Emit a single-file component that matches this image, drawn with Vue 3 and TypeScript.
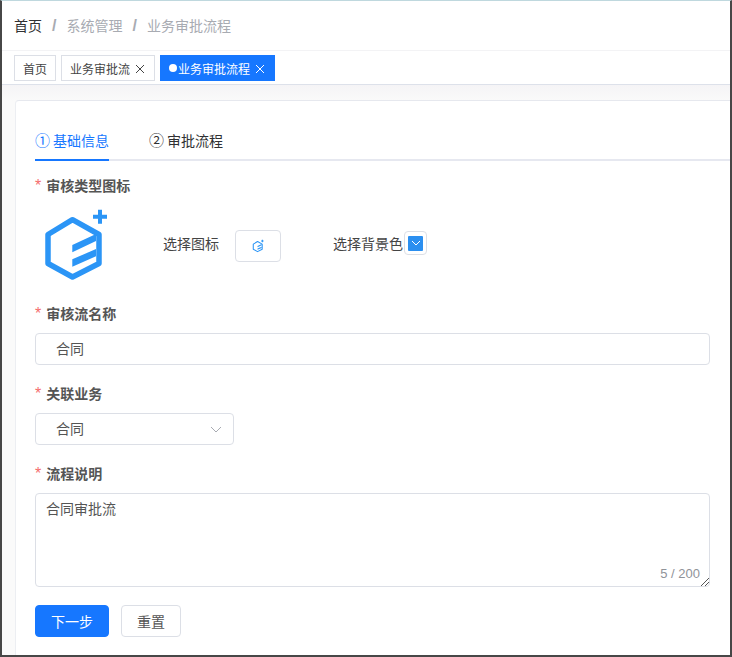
<template>
  <div class="frame">
    <header class="crumbs">
      <span class="crumb first">首页</span>
      <span class="slash">/</span>
      <span class="crumb">系统管理</span>
      <span class="slash">/</span>
      <span class="crumb">业务审批流程</span>
    </header>

    <nav class="tags">
      <span
        v-for="tag in tags"
        :key="tag.label"
        class="tag"
        :class="{ active: tag.active }"
      >
        <i v-if="tag.active" class="dot"></i>{{ tag.label }}
        <svg v-if="tag.closable" class="close" width="10" height="10" viewBox="0 0 10 10" fill="none" stroke="currentColor" stroke-width="1">
          <path d="M1 1l8 8M9 1l-8 8" />
        </svg>
      </span>
    </nav>

    <main class="main">
      <section class="card">
        <div class="steps">
          <span class="step active"><em>①</em>基础信息</span>
          <span class="step"><em>②</em>审批流程</span>
        </div>

        <div class="field">
          <label class="label">审核类型图标</label>
          <div class="icon-row">
            <svg class="big-icon" width="70" height="80" viewBox="0 0 70 80">
              <path d="M32.5 14.7 L59 29.5 V58.5 L32.5 72 L8 58.5 V29.5 Z" fill="none" stroke="#2b95f6" stroke-width="5.5" stroke-linejoin="round" />
              <path d="M32.3 40 L56 29 V36 L32.3 47.3 Z M32.3 54.3 L56 44 V51.3 L32.3 61.7 Z" fill="#2b95f6" />
              <path d="M53 11.7h14M60 4.7v14" stroke="#2b95f6" stroke-width="4" fill="none" />
            </svg>
            <span class="pick-text">选择图标</span>
            <button class="pick-btn">
              <svg width="14" height="14" viewBox="0 0 70 80">
                <path d="M32.5 14.7 L59 29.5 V58.5 L32.5 72 L8 58.5 V29.5 Z" fill="none" stroke="#2b95f6" stroke-width="6" stroke-linejoin="round" />
                <path d="M32.3 40 L56 29 V36 L32.3 47.3 Z M32.3 54.3 L56 44 V51.3 L32.3 61.7 Z" fill="#2b95f6" />
                <path d="M53 11.7h14M60 4.7v14" stroke="#2b95f6" stroke-width="6" fill="none" />
              </svg>
            </button>
            <span class="color-text">选择背景色</span>
            <span class="swatch">
              <span class="swatch-inner">
                <svg width="10" height="6" viewBox="0 0 10 6" fill="none" stroke="#fff" stroke-width="1">
                  <path d="M1 1l4 4 4-4" />
                </svg>
              </span>
            </span>
          </div>
        </div>

        <div class="field">
          <label class="label">审核流名称</label>
          <div class="input">合同</div>
        </div>

        <div class="field">
          <label class="label">关联业务</label>
          <div class="input select">
            合同
            <svg width="12" height="7" viewBox="0 0 12 7" fill="none" stroke="#a8abb2" stroke-width="1">
              <path d="M1 1l5 5 5-5" />
            </svg>
          </div>
        </div>

        <div class="field">
          <label class="label">流程说明</label>
          <div class="textarea">
            合同审批流
            <span class="count">5 / 200</span>
            <svg class="grip" width="8" height="8" viewBox="0 0 8 8" stroke="#555" stroke-width="1">
              <path d="M0 8L8 0M4 8L8 4" />
            </svg>
          </div>
        </div>

        <div class="actions">
          <button class="btn primary">下一步</button>
          <button class="btn">重置</button>
        </div>
      </section>
    </main>
  </div>
</template>

<script setup lang="ts">
const tags: Array<{ label: string; closable: boolean; active: boolean }> = [
  { label: '首页', closable: false, active: false },
  { label: '业务审批流', closable: true, active: false },
  { label: '业务审批流程', closable: true, active: true },
]
</script>

<style>
html, body {
  margin: 0;
  background: #fff;
  overflow: hidden;
}
</style>

<style scoped>
.frame {
  box-sizing: border-box;
  width: 732px;
  height: 657px;
  overflow: hidden;
  border-top: 1px solid #bfd8de;
  border-left: 2px solid #474747;
  border-right: 2px solid #474747;
  border-bottom: 2px solid #474747;
  background: #fff;
  font-family: "Liberation Sans", "Noto Sans CJK SC", sans-serif;
  font-size: 14px;
  color: #333;
}

.crumbs {
  display: flex;
  align-items: center;
  height: 50px;
  padding: 0 0 2px 12px;
  border-bottom: 1px solid #f3f3f5;
  box-sizing: border-box;
  color: #a8abb2;
}
.crumb.first { color: #303133; }
.slash {
  margin: 2px 10px 0;
  font-size: 16px;
  font-weight: 700;
  color: #a8abb2;
}

.tags {
  display: flex;
  gap: 5px;
  height: 34px;
  padding: 4px 0 0 12px;
  box-sizing: border-box;
  border-bottom: 1px solid #dde1ea;
}
.tag {
  display: flex;
  align-items: center;
  box-sizing: border-box;
  height: 26px;
  padding: 0 8px;
  border: 1px solid #dcdfe6;
  font-size: 12px;
  color: #444;
  white-space: nowrap;
}
.tag.active {
  background: #1677ff;
  border-color: #1677ff;
  color: #fff;
}
.dot {
  width: 8px;
  height: 8px;
  border-radius: 50%;
  background: #fff;
  margin-right: 1px;
}
.close {
  margin: 1px 1px 0 5px;
}

.main {
  height: 600px;
  padding: 15px 0 0 13px;
  background: linear-gradient(#f5f4f6, #fafafa 16px);
  box-sizing: border-box;
}
.card {
  box-sizing: border-box;
  width: 760px;
  height: 600px;
  padding: 29px 0 0 19px;
  background: #fff;
  border-top: 1px solid #e6e8ee;
  border-left: 1px solid #eceef2;
  border-radius: 4px 0 0 0;
}

.steps {
  display: flex;
  gap: 40px;
  width: 696px;
  height: 29px;
  border-bottom: 2px solid #e6e8f0;
  margin-bottom: 14px;
}
.step {
  display: block;
  box-sizing: border-box;
  height: 31px;
  line-height: 22px;
  color: #303133;
}
.step em {
  font-style: normal;
  font-size: 15px;
  margin-right: 3px;
}
.step.active {
  color: #1677ff;
  border-bottom: 2px solid #1677ff;
}

.field {
  margin-bottom: 18px;
}
.label {
  display: block;
  line-height: 22px;
  margin-bottom: 8px;
  font-weight: 700;
  color: #555;
}
.label::before {
  content: "*";
  color: #f56c6c;
  margin-right: 5px;
  font-size: 16px;
  font-weight: 400;
}

.icon-row {
  display: flex;
  align-items: center;
  height: 80px;
}
.big-icon {
  margin-left: 5px;
  flex: none;
}
.pick-text {
  margin-left: 53px;
  margin-bottom: 4px;
  color: #444;
}
.pick-btn {
  box-sizing: border-box;
  width: 46px;
  height: 32px;
  margin-left: 16px;
  margin-top: 2px;
  padding: 0;
  display: flex;
  align-items: center;
  justify-content: center;
  background: #fff;
  border: 1px solid #dcdfe6;
  border-radius: 4px;
}
.color-text {
  margin-left: 52px;
  margin-bottom: 4px;
  color: #444;
}
.swatch {
  box-sizing: border-box;
  display: flex;
  align-items: center;
  justify-content: center;
  width: 23px;
  height: 24px;
  margin-left: 1px;
  margin-bottom: 4px;
  border: 1px solid #dcdfe6;
  border-radius: 4px;
}
.swatch-inner {
  display: flex;
  align-items: center;
  justify-content: center;
  width: 15px;
  height: 15px;
  background: #2b8ff0;
  border-radius: 1px;
}

.input {
  box-sizing: border-box;
  width: 675px;
  height: 32px;
  line-height: 30px;
  padding-left: 20px;
  border: 1px solid #dcdfe6;
  border-radius: 4px;
  color: #555;
}
.select {
  display: flex;
  align-items: center;
  justify-content: space-between;
  width: 199px;
  padding-right: 11px;
}
.textarea {
  position: relative;
  box-sizing: border-box;
  width: 675px;
  height: 94px;
  padding: 4px 10px;
  line-height: 22px;
  border: 1px solid #dcdfe6;
  border-radius: 4px;
  color: #555;
}
.count {
  position: absolute;
  right: 9px;
  bottom: 3px;
  font-size: 13px;
  line-height: 18px;
  color: #909399;
}
.grip {
  position: absolute;
  right: 0;
  bottom: 0;
}

.actions {
  display: flex;
  gap: 12px;
}
.btn {
  box-sizing: border-box;
  width: 60px;
  height: 32px;
  padding: 0;
  background: #fff;
  border: 1px solid #dcdfe6;
  border-radius: 4px;
  font: inherit;
  color: #555;
}
.btn.primary {
  width: 74px;
  background: #1677ff;
  border-color: #1677ff;
  color: #fff;
}
</style>
